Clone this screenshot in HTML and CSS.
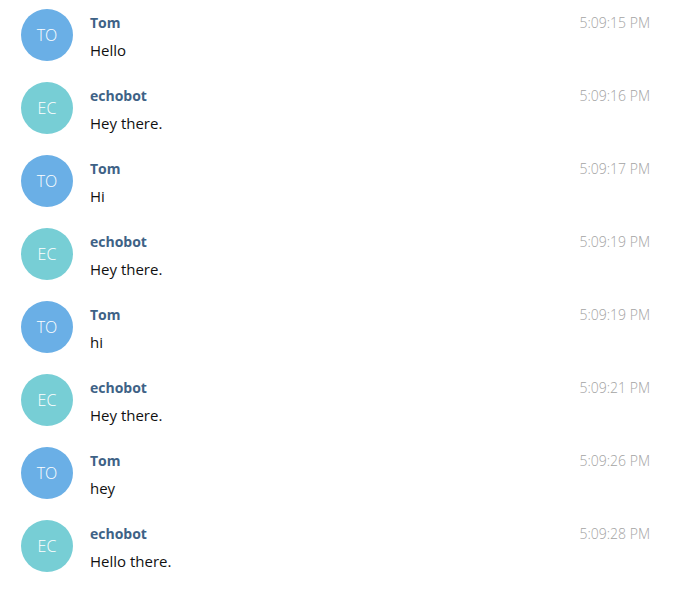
FILE: index.html
```html
<!DOCTYPE html>
<html>
<head>
<meta charset="utf-8">
<link rel="stylesheet" href="styles.css">
</head>
<body>
<div class="chat">
  <div class="msg"><div class="avatar to">TO</div><div class="body"><div class="head"><span class="name">Tom</span><span class="time">5:09:15 PM</span></div><div class="text">Hello</div></div></div>
  <div class="msg"><div class="avatar ec">EC</div><div class="body"><div class="head"><span class="name">echobot</span><span class="time">5:09:16 PM</span></div><div class="text">Hey there.</div></div></div>
  <div class="msg"><div class="avatar to">TO</div><div class="body"><div class="head"><span class="name">Tom</span><span class="time">5:09:17 PM</span></div><div class="text">Hi</div></div></div>
  <div class="msg"><div class="avatar ec">EC</div><div class="body"><div class="head"><span class="name">echobot</span><span class="time">5:09:19 PM</span></div><div class="text">Hey there.</div></div></div>
  <div class="msg"><div class="avatar to">TO</div><div class="body"><div class="head"><span class="name">Tom</span><span class="time">5:09:19 PM</span></div><div class="text">hi</div></div></div>
  <div class="msg"><div class="avatar ec">EC</div><div class="body"><div class="head"><span class="name">echobot</span><span class="time">5:09:21 PM</span></div><div class="text">Hey there.</div></div></div>
  <div class="msg"><div class="avatar to">TO</div><div class="body"><div class="head"><span class="name">Tom</span><span class="time">5:09:26 PM</span></div><div class="text">hey</div></div></div>
  <div class="msg"><div class="avatar ec">EC</div><div class="body"><div class="head"><span class="name">echobot</span><span class="time">5:09:28 PM</span></div><div class="text">Hello there.</div></div></div>
</div>
</body>
</html>
```
FILE: styles.css
```css
html, body {
  margin: 0;
  padding: 0;
  background: #ffffff;
}
body {
  font-family: "Open Sans", "Noto Sans", sans-serif;
  color: #111111;
}
.chat {
  display: flex;
  flex-direction: column;
}
.msg {
  display: flex;
  align-items: flex-start;
  gap: 17px;
  height: 73px;
  box-sizing: border-box;
  padding: 9px 45px 0 21px;
}
.avatar {
  flex: none;
  width: 52px;
  height: 52px;
  border-radius: 50%;
  color: #ffffff;
  font-size: 16px;
  font-weight: 300;
  display: flex;
  align-items: center;
  justify-content: center;
}
.avatar.to { background: #6aafe6; }
.avatar.ec { background: #77ced5; }
.body {
  flex: 1;
  display: flex;
  flex-direction: column;
  padding-top: 4px;
}
.head {
  display: flex;
  justify-content: space-between;
  align-items: baseline;
  line-height: 20px;
}
.name {
  font-size: 14px;
  font-weight: 700;
  color: #3e6286;
}
.time {
  font-size: 14px;
  font-weight: 300;
  color: #a3a3a3;
}
.text {
  margin-top: 7px;
  font-size: 15px;
  line-height: 20px;
  color: #111111;
}
```
